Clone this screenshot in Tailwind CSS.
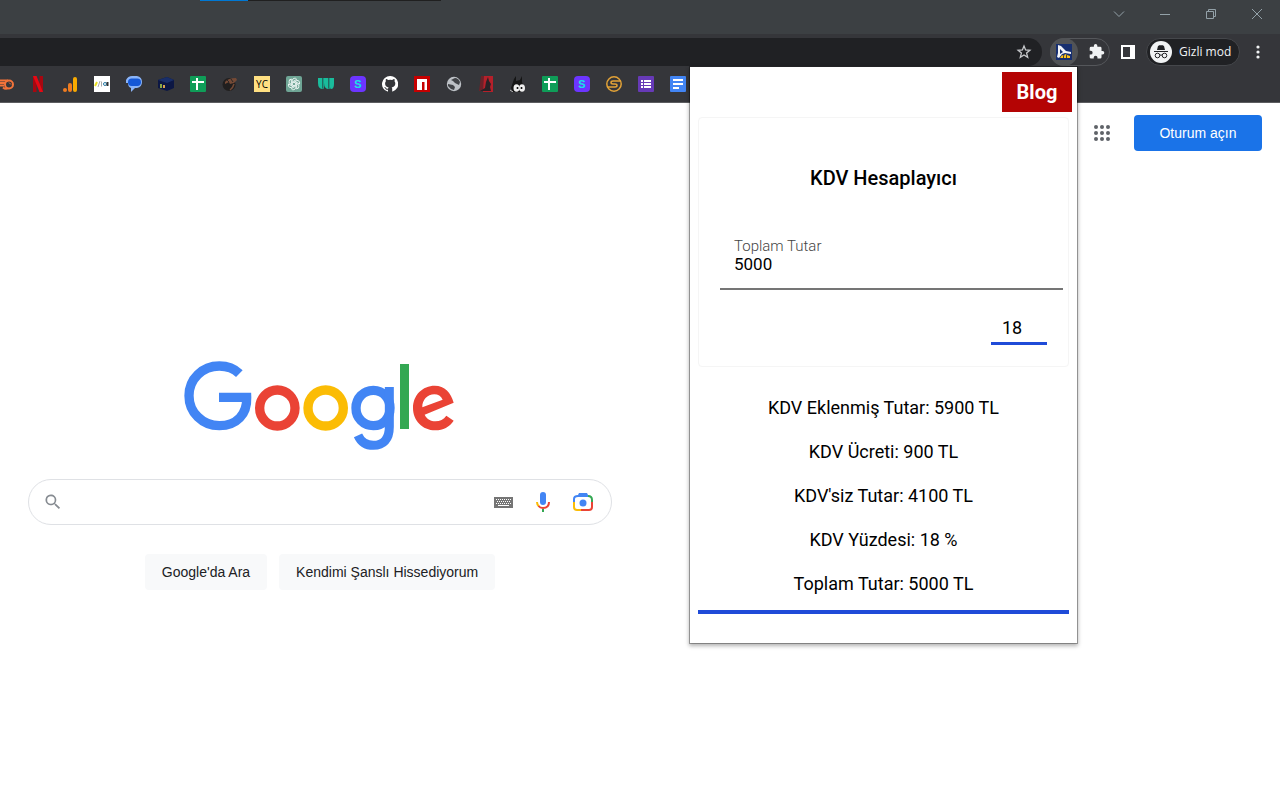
<!DOCTYPE html>
<html lang="tr">
<head>
<meta charset="utf-8">
<title>Google</title>
<script src="https://cdn.jsdelivr.net/npm/@tailwindcss/browser@4"></script>
</head>
<body class="relative min-h-screen overflow-x-hidden bg-white font-['Liberation_Sans',Arial,sans-serif] text-sm text-[#202124]">

<header class="bg-[#35363a]">
  <div class="relative flex h-[34px] justify-end bg-[#3c4043] text-[#93a1a8]">
    <div class="absolute left-[200px] top-0 flex h-px w-[241px] bg-[#202020]"><span class="w-12 bg-[#0078d4]"></span></div>
    <button aria-label="Sekme ara" class="flex h-7 w-[46px] items-center justify-center"><svg width="12" height="12" fill="none" stroke="currentColor"><path d="M1 3.500l5 5 5-5"/></svg></button>
    <button aria-label="Küçült" class="flex h-7 w-[46px] items-center justify-center"><svg width="12" height="12" fill="none" stroke="currentColor"><path d="M1 6.500h10"/></svg></button>
    <button aria-label="Geri yükle" class="flex h-7 w-[46px] items-center justify-center"><svg width="12" height="12" fill="none" stroke="currentColor"><path d="M1.500 3.500h7v7h-7zM3.500 3.500v-2h7v7h-2"/></svg></button>
    <button aria-label="Kapat" class="flex h-7 w-[46px] items-center justify-center"><svg width="12" height="12" fill="none" stroke="currentColor"><path d="M1 1l10 10M11 1L1 11"/></svg></button>
  </div>

  <div class="flex h-8 items-end">
    <div class="flex h-7 flex-1 items-center justify-end rounded-r-full bg-[#202124] pr-2.5">
      <button aria-label="Yer işareti ekle" class="text-[#c8cacd]"><svg width="16" height="16" viewBox="0 0 16 16" class="block" fill="none" stroke="currentColor" stroke-width="1.300"><path d="M8 2l1.600 4 4.300.3-3.300 2.800 1.100 4.200L8 11l-3.700 2.300 1.100-4.200L2.100 6.300 6.400 6z"/></svg></button>
    </div>
    <div class="ml-2 flex h-7 w-[60px] items-center rounded-full border border-[#55575b]">
      <button aria-label="KDV Hesaplayıcı" class="-ml-px flex size-7 items-center justify-center rounded-full bg-[#515356]"><svg width="16" height="16"><path fill="#172f70" d="M0 0h16v16H0z"/><path fill="#f2f4f8" d="M2 1l3 1 5 5 5 1v2l-6-1-3 1-3 4-2-1 1-4z"/><path fill="#172f70" d="M4 5l3 3-3 2z"/><path fill="#ffc21a" d="M4 14l2-3 2 1 1-2 2 1 3 1v2z"/><path stroke="#4e4632" d="M7.500 12v2M10.500 11v3"/></svg></button>
      <button aria-label="Uzantılar" class="ml-[11px] text-[#f1f3f4]"><svg width="16" height="16" viewBox="1 1 23 23" fill="currentColor" class="block"><path d="M20.500 11H19V7a2 2 0 0 0-2-2h-4V3.500a2.500 2.500 0 0 0-5 0V5H4a2 2 0 0 0-2 2v3.800h1.500a2.700 2.700 0 0 1 0 5.400H2V20a2 2 0 0 0 2 2h3.800v-1.500a2.700 2.700 0 0 1 5.400 0V22H17a2 2 0 0 0 2-2v-4h1.500a2.500 2.500 0 0 0 0-5z"/></svg></button>
    </div>
    <button aria-label="Yan panel" class="ml-2.5 flex h-7 w-4 items-center justify-center text-white"><svg width="14" height="14"><path fill="currentColor" fill-rule="evenodd" d="M0 0h14v14H0zM2 2v10h7V2z"/></svg></button>
    <button class="ml-2.5 flex h-7 w-[94px] items-center rounded-full border border-[#45474b] bg-[#202124] pl-[3px] font-['Open_Sans','Noto_Sans',sans-serif] text-xs text-[#f1f3f4]">
      <svg width="22" height="22" viewBox="0 0 22 22" fill="none" stroke="#202124"><circle cx="11" cy="11" r="11" fill="#f1f3f4" stroke="none"/><path fill="#202124" stroke="none" d="M7 9l1-4 2-1 1 .5 1-.5 2 1 1 4z"/><path d="M4 10.500h14"/><circle cx="7.500" cy="14.500" r="2.300"/><circle cx="14.500" cy="14.500" r="2.300"/><path d="M9.800 14.300q1.200-.8 2.400 0"/></svg>
      <span class="ml-[7px] whitespace-nowrap">Gizli mod</span>
    </button>
    <button aria-label="Menü" class="ml-2.5 mr-3.5 flex h-7 w-4 items-center justify-center text-[#f1f3f4]"><svg width="4" height="14" fill="currentColor"><circle cx="2" cy="2" r="1.600"/><circle cx="2" cy="7" r="1.600"/><circle cx="2" cy="12" r="1.600"/></svg></button>
  </div>

  <nav aria-label="Yer işaretleri" class="-ml-0.5 flex h-[37px] items-center gap-4 border-b border-[#5c5d60]">
    <a href="#" aria-label="Semrush"><svg width="16" height="16" class="block" fill="none" stroke="#f2733a"><path stroke-width="1.800" d="M0 4.500h10M2 7h5M2 9.500h4M5 11.500q2 2 5 1"/><circle cx="11" cy="8.500" r="4" stroke-width="2"/><path d="M11 6.500l2 2"/></svg></a>
    <a href="#" aria-label="Netflix"><svg width="16" height="16" class="block"><path fill="#a80710" d="M3 0h3.500v16H3zM9.500 0H13v16H9.500z"/><path fill="#e50914" d="M3 0h3.500L13 16H9.500z"/></svg></a>
    <a href="#" aria-label="Analytics"><svg width="16" height="16" class="block"><rect x="11" y="1" width="4" height="15" rx="2" fill="#f9ab00"/><rect x="6" y="7" width="4" height="9" rx="2" fill="#f07c20"/><circle cx="3" cy="14" r="2" fill="#f07c20"/></svg></a>
    <a href="#" aria-label="Site"><svg width="16" height="16" class="block"><path fill="#fff" d="M0 0h16v16H0z"/><path stroke="#e9df20" stroke-width="2" d="M1 10l2-4"/><path stroke="#aaa" d="M4 11l2-6M7.500 5.500v5"/><circle cx="11" cy="8" r="1.500" fill="none" stroke="#287da8"/><path stroke="#333" stroke-width="2" d="M13.500 6v4"/></svg></a>
    <a href="#" aria-label="Mesajlar"><svg width="16" height="16" class="block"><path fill="#8ab4f8" d="M6 0h5q5 1 5 6 0 5-5 6H9l-4 4v-4q-3-1-3-5H0V4q2-4 6-4z"/><rect x="2" y="2.500" width="13" height="7.500" rx="3.700" fill="#1558d6"/></svg></a>
    <a href="#" aria-label="Kutu"><svg width="16" height="16" class="block"><path fill="#0c1744" d="M0 4l9-3 7 3v8l-7 3-9-3z"/><path fill="#192e68" d="M0 4l9-3 7 3-7 3z"/><path fill="#89a847" d="M2 8h2v4H2z"/><path fill="#d6a04d" d="M5 9h2v3H5z"/></svg></a>
    <a href="#" aria-label="E-Tablolar"><svg width="16" height="16" class="block"><rect width="16" height="16" rx="1" fill="#0f9d58"/><path stroke="#fff" stroke-width="2" d="M2 6h12M7 2v12"/></svg></a>
    <a href="#" aria-label="Araç"><svg width="16" height="16" class="block"><circle cx="7" cy="8.500" r="6.500" fill="#211f1f"/><path fill="#754a36" d="M3 6q3-4 11-4l1 2-3 3-4 1-1-2-4 2z"/><path fill="none" stroke="#754a36" stroke-width="1.500" d="M12 8q-1 4-4 6"/><path stroke="#2a2727" d="M5 4l2 2M9 3l2 3"/></svg></a>
    <a href="#" aria-label="YC" class="flex size-4 items-center justify-center bg-[#ffe082] font-['Open_Sans',sans-serif] text-[10px] leading-4 font-medium text-black">YC</a>
    <a href="#" aria-label="ChatGPT"><svg width="16" height="16" class="block" fill="none" stroke="#f0f8f6"><rect width="16" height="16" rx="2" fill="#6fa595" stroke="none"/><g stroke-width=".9"><path id="petal" d="M6.300 9V4.500a2.400 2.400 0 0 1 4.400-1.200L7 5.600"/><use href="#petal" transform="rotate(60 8 8)"/><use href="#petal" transform="rotate(120 8 8)"/><use href="#petal" transform="rotate(180 8 8)"/><use href="#petal" transform="rotate(240 8 8)"/><use href="#petal" transform="rotate(300 8 8)"/></g></svg></a>
    <a href="#" aria-label="W"><svg width="16" height="16" class="block" fill="#1abc9c"><path d="M0 2h4v9q0 1 1 2-5 0-5-6zM6 2h4v9q0 1 1 2-5 0-5-6zM12 2h4v6q0 5-3 5-1 0-1-2z"/><path fill="#139e86" d="M4.500 2H6v11q-1.500 0-1.500-2zM10.500 2H12v11q-1.500 0-1.500-2z"/></svg></a>
    <a href="#" aria-label="S" class="flex size-4 items-center justify-center rounded bg-[#6c35ff] text-[11px] font-bold leading-4 text-[#16e5e5]">S</a>
    <a href="#" aria-label="GitHub"><svg width="16" height="16" viewBox="0 0 16 16" class="block" fill="#fff"><path d="M8 0a8 8 0 0 0-2.500 15.600c.4.100.500-.2.500-.4v-1.500c-2 .4-2.500-.9-2.700-1.300-.4-.7-.9-1-1.300-1.300.8-.5 1.500.1 2 .8.600 1 1.400.8 2.100.5.100-.5.300-.9.600-1.100-1.800-.2-3.600-.9-3.600-4 0-.9.300-1.600.8-2.100-.1-.2-.4-1 .1-2.100 0 0 .7-.2 2.200.8a7.600 7.600 0 0 1 4 0c1.500-1 2.200-.8 2.200-.8.500 1.100.2 1.900.1 2.100.5.500.8 1.200.8 2.100 0 3.100-1.900 3.800-3.700 4 .3.300.6.800.6 1.500v2.400c0 .2.100.5.500.4A8 8 0 0 0 8 0z"/></svg></a>
    <a href="#" aria-label="npm"><svg width="16" height="16" class="block"><path fill="#c60000" d="M0 0h16v16H0z"/><path fill="#fff" d="M3 3h10v11h-2.500V6H8v8H3z"/></svg></a>
    <a href="#" aria-label="Web"><svg width="16" height="16" class="block"><circle cx="8" cy="8" r="7.200" fill="#bdc1c6"/><path fill="#414347" d="M7 3q1-1 3-1 3 1 4 4l-1 3-2-1-2-1-2-2-2-1zM2 8l5 1 2 2-1 3-3-1-3-3z"/></svg></a>
    <a href="#" aria-label="Kırmızı"><svg width="16" height="16" class="block"><path fill="#6b2229" d="M3 0h6L5 15H1z"/><path fill="#b5202a" d="M6 0h9v16H5z"/><path fill="#292226" d="M10 1l1 4 2 3-1 3 1 4H2l5-3 1-6z"/></svg></a>
    <a href="#" aria-label="Böcek"><svg width="16" height="16" class="block"><path fill="#151515" d="M4 3l2-3v5l4-1 2-4v6l2 6-3 4H3l-2-4z"/><ellipse cx="6.500" cy="12" rx="3" ry="3.800" fill="#eee"/><ellipse cx="12" cy="12" rx="3" ry="3.800" fill="#eee"/><circle cx="7.500" cy="12" r="1"/><circle cx="11.500" cy="12" r="1"/><path stroke="#bbb" d="M0 14l3 2"/></svg></a>
    <a href="#" aria-label="E-Tablolar 2"><svg width="16" height="16" class="block"><rect width="16" height="16" rx="1" fill="#0f9d58"/><path stroke="#fff" stroke-width="2" d="M2 6h12M7 2v12"/></svg></a>
    <a href="#" aria-label="S 2" class="flex size-4 items-center justify-center rounded bg-[#6c35ff] text-[11px] font-bold leading-4 text-[#16e5e5]">S</a>
    <a href="#" aria-label="Altın S"><svg width="16" height="16" class="block" fill="none" stroke="#e2a237" stroke-width="1.500"><circle cx="8" cy="8" r="7.200"/><path d="M15 5H7Q5 5 5 6.500T7 8h2q2 0 2 1.500T9 11H1"/></svg></a>
    <a href="#" aria-label="Formlar"><svg width="16" height="16" class="block"><rect width="16" height="16" rx="1" fill="#673ab7"/><path stroke="#fff" stroke-width="2" d="M3 5h2M6 5h7M3 8h2M6 8h7M3 11h2M6 11h7"/></svg></a>
    <a href="#" aria-label="Dokümanlar"><svg width="16" height="16" class="block"><rect width="16" height="16" rx="1" fill="#4285f4"/><path stroke="#fff" stroke-width="2" d="M3 4h10M3 8h10M3 12h6"/></svg></a>
  </nav>
</header>

<div class="flex h-[60px] items-center justify-end gap-5 pr-[18px]">
  <button aria-label="Google uygulamaları" class="flex size-6 items-center justify-center text-[#5f6368]"><svg width="16" height="16" fill="currentColor"><circle cx="2" cy="2" r="2"/><circle cx="8" cy="2" r="2"/><circle cx="14" cy="2" r="2"/><circle cx="2" cy="8" r="2"/><circle cx="8" cy="8" r="2"/><circle cx="14" cy="8" r="2"/><circle cx="2" cy="14" r="2"/><circle cx="8" cy="14" r="2"/><circle cx="14" cy="14" r="2"/></svg></button>
  <a href="#" class="flex h-9 w-32 items-center justify-center rounded bg-[#1a73e8] text-white">Oturum açın</a>
</div>

<main class="flex w-1/2 flex-col items-center px-7 pt-[187px]">
  <svg role="img" aria-label="Google" width="300" height="110" viewBox="0 0 900 330" fill="none">
    <path stroke="#4285f4" stroke-width="28" d="M208 71C192 55 171 48 148 48C97 48 57 87 57 137C57 187 97 227 148 227C200 227 232 193 230 142H147"/>
    <ellipse cx="322" cy="174" rx="53" ry="54" stroke="#ea4335" stroke-width="28"/>
    <ellipse cx="467" cy="174" rx="53" ry="54" stroke="#fbbc05" stroke-width="28"/>
    <path stroke="#4285f4" stroke-width="28" d="M610 121C580 121 558 145 558 174C558 204 580 227 610 227C640 227 660 204 660 174C660 145 640 121 610 121Z"/>
    <path stroke="#4285f4" stroke-width="27" d="M658 111V230C658 268 640 286 610 286C588 286 572 274 564 256"/>
    <path fill="#34a853" d="M690 42h27v195h-27z"/>
    <path fill="#ea4335" d="M851 158L764 194C771 208 783 214 796 214C810 214 821 208 829 197L851 212C838 231 820 241 796 241C757 241 729 211 729 174C729 135 758 107 794 107C824 107 843 128 851 158ZM757 172L818 149C813 138 804 133 793 133C772 133 756 150 757 172Z" fill-rule="evenodd"/>
  </svg>
  <form class="mt-[19px] flex w-full flex-col items-center">
    <div class="flex h-[46px] w-full items-center rounded-full border border-[#dfe1e5] pl-3.5 pr-4">
      <svg width="20" height="20" viewBox="0 0 24 24" fill="#868b91"><path d="M15.500 14h-.8l-.3-.3A6.500 6.500 0 1 0 13.700 14.400l.3.300v.8l5 5 1.500-1.500zm-6 0a4.500 4.500 0 1 1 0-9 4.500 4.500 0 0 1 0 9z"/></svg>
      <input type="text" aria-label="Ara" class="mx-3 h-9 min-w-0 flex-1 bg-transparent text-base outline-none">
      <button type="button" aria-label="Klavye" class="mr-[18px]"><svg width="19" height="11" class="block"><path fill="#757575" d="M0 0h19v11H0z"/><path stroke="#fff" stroke-dasharray="1 1" d="M2 2.500h15M3 4.500h13M2 6.500h15"/><path stroke="#fff" d="M4 8.500h11"/></svg></button>
      <button type="button" aria-label="Sesle arama" class="mr-4"><svg width="24" height="24" viewBox="0 0 24 24" class="block"><rect x="9" y="2" width="6" height="13" rx="3" fill="#4285f4"/><path fill="none" stroke="#fbbc05" stroke-width="2" d="M6 12q0 3 2 4.500"/><path fill="none" stroke="#ea4335" stroke-width="2" d="M7.500 16q1.500 2 4.500 2 6 0 6-6"/><path fill="#34a853" d="M11 19h2v3h-2z"/></svg></button>
      <button type="button" aria-label="Görselle arama"><svg width="24" height="24" viewBox="0 0 24 24" class="block" fill="none" stroke-width="2"><path stroke="#4285f4" d="M3 12V9q0-3 4-3"/><path fill="#4285f4" d="M6 7l2-4h8l2 4z"/><path stroke="#34a853" d="M17 6q4 0 4 4v2"/><path stroke="#fbbc05" d="M3 12v5q0 3 3 3h4"/><path stroke="#ea4335" d="M21 12v5q0 3-3 3h-8"/><circle cx="12" cy="13" r="3.500" fill="#4285f4"/></svg></button>
    </div>
    <div class="mt-[29px] flex gap-3">
      <button type="button" class="h-9 rounded bg-[#f8f9fa] px-[17px]">Google'da Ara</button>
      <button type="button" class="h-9 rounded bg-[#f8f9fa] px-[17px]">Kendimi Şanslı Hissediyorum</button>
    </div>
  </form>
</main>

<section aria-label="KDV Hesaplayıcı" class="absolute right-[203px] top-[67px] w-[387px] bg-white px-2 pb-[29px] font-[Roboto,sans-serif] text-lg text-black shadow-[0_0_0_1px_rgba(0,0,0,0.3),0_2px_4px_1px_rgba(0,0,0,0.3)]">
  <div class="-mr-[3px] flex justify-end py-[5px]">
    <a href="#" class="flex h-10 w-[70px] items-center justify-center bg-[#b40404] text-xl font-bold text-white">Blog</a>
  </div>
  <div class="flex flex-col rounded border border-[#f5f5f5] pb-[21px] pt-12">
    <h1 class="text-center text-xl leading-6 font-medium">KDV Hesaplayıcı</h1>
    <div class="ml-[21px] mr-[5px] mt-[46px] flex flex-col">
      <label for="amount" class="pl-3.5 text-[15px] leading-5 font-light text-[#444]">Toplam Tutar</label>
      <input id="amount" type="text" value="5000" class="h-[34px] border-b-2 border-[#757575] pb-4 pl-3.5 text-[17px] leading-4 outline-none">
    </div>
    <input aria-label="KDV oranı" type="text" value="18" class="mr-[21px] mt-[25px] h-[30px] w-14 self-end border-b-3 border-[#1f4bd8] pb-0.5 pl-[11px] text-lg leading-6 outline-none">
  </div>
  <div class="mt-[19px] border-b-4 border-[#1f4bd8] pb-1 text-center leading-[44px]">
    <p>KDV Eklenmiş Tutar: 5900 TL</p>
    <p>KDV Ücreti: 900 TL</p>
    <p>KDV'siz Tutar: 4100 TL</p>
    <p>KDV Yüzdesi: 18 %</p>
    <p>Toplam Tutar: 5000 TL</p>
  </div>
</section>
</body>
</html>
